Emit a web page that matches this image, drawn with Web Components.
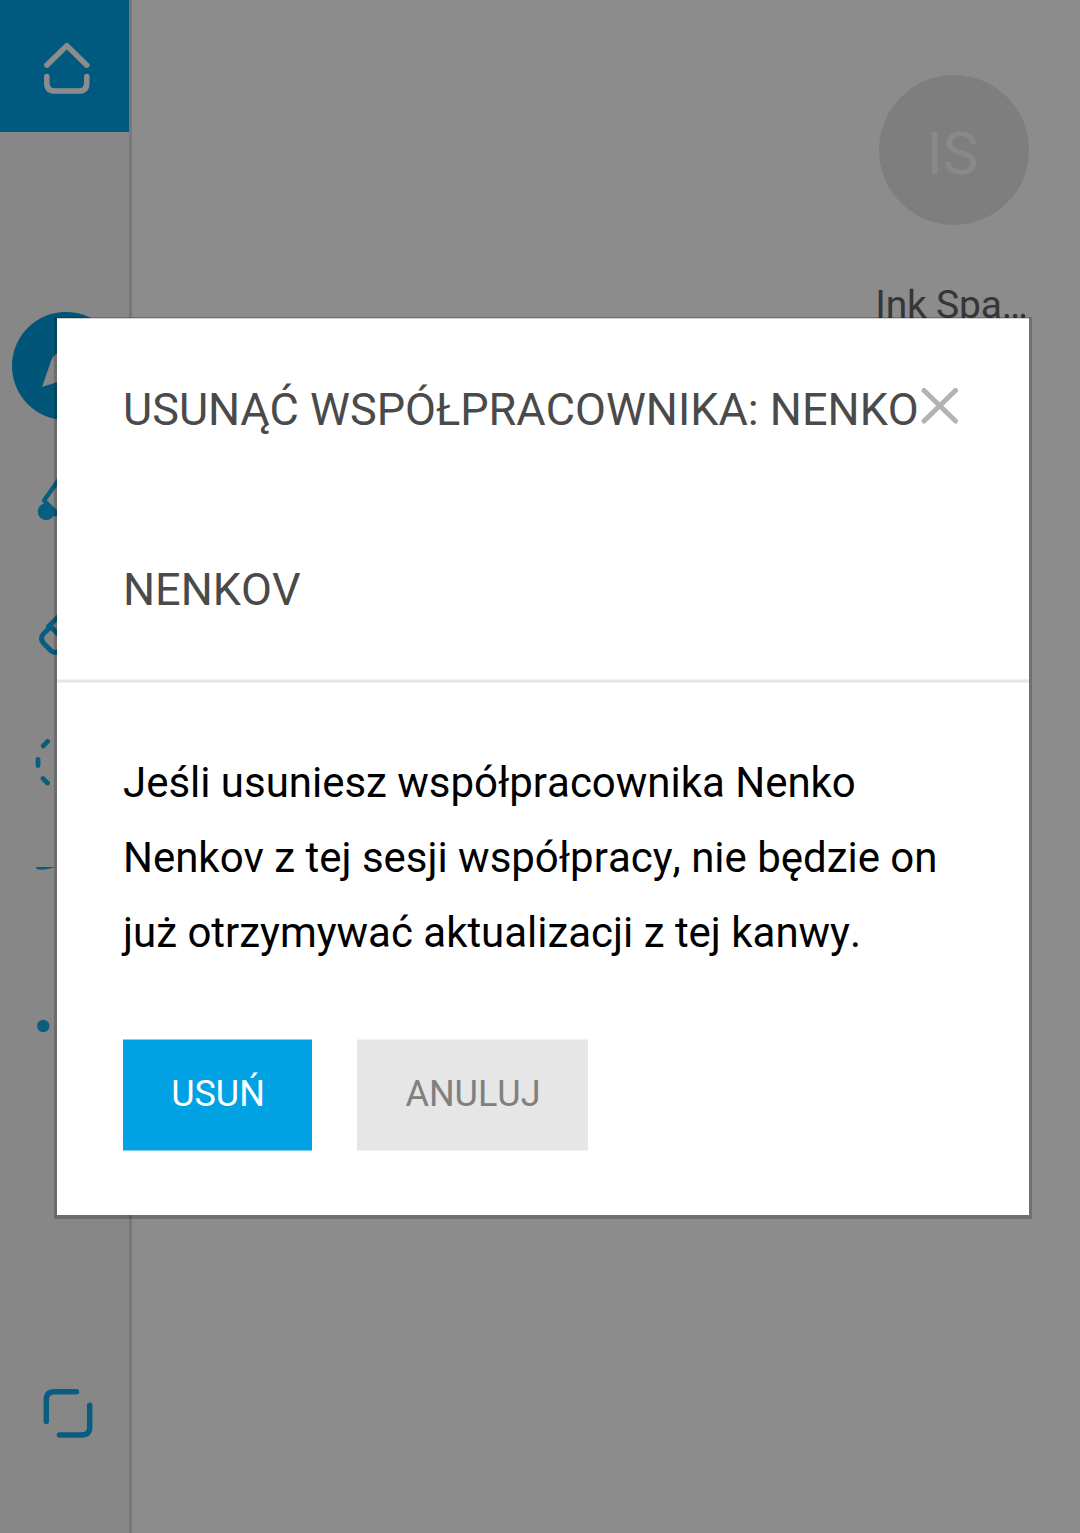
<!DOCTYPE html>
<html lang="pl">
<head>
<meta charset="utf-8">
<title>Ink Space</title>
<style>
html,body{margin:0;height:100%;overflow:hidden}
body{font-family:Roboto,"Liberation Sans",sans-serif;background:#fff}
</style>
</head>
<body>
<ink-app>
  <tool-rail slot="rail"></tool-rail>
  <user-badge slot="user" initials="IS">Ink Spa…</user-badge>
  <confirm-dialog slot="dialog">
    <span slot="title">USUNĄĆ WSPÓŁPRACOWNIKA: NENKO NENKOV</span>
    Jeśli usuniesz współpracownika Nenko Nenkov z tej sesji współpracy, nie będzie on już otrzymywać aktualizacji z tej kanwy.
    <flat-button slot="actions" kind="primary">USUŃ</flat-button>
    <flat-button slot="actions">ANULUJ</flat-button>
  </confirm-dialog>
</ink-app>
<script>
const define = (name, html, setup) => customElements.define(name, class extends HTMLElement {
  connectedCallback() {
    if (this.shadowRoot) return;
    this.attachShadow({mode: 'open'}).innerHTML = html;
    if (setup) setup(this);
  }
});

define('ink-app', `<style>
:host{display:flex;position:relative;width:1080px;height:1533px;overflow:hidden;background:#fff}
main{flex:1;display:flex;justify-content:flex-end;align-items:flex-start;padding:75px 51px 0 0}
.scrim{position:absolute;inset:0;box-sizing:border-box;padding:317px 48px 0 54px;background:rgba(0,0,0,.45)}
</style><slot name="rail"></slot><main><slot name="user"></slot></main><div class="scrim"><slot name="dialog"></slot></div>`);

define('tool-icon', `<style>
:host{display:block;width:129px;height:132px;color:#12acea}
:host([name=home]){background:#00a5e7;color:#fff}
svg{display:block;fill:none;stroke:currentColor;stroke-width:5.5;stroke-linecap:round;stroke-linejoin:round}
</style><svg width="129" height="132" viewBox="0 0 129 132"></svg>`, el => {
  const art = {
    home: '<path d="M46.8 65.2 66.8 45.6 86.8 65.2M46.8 76.4V83Q46.8 91.1 55.1 91.1H78.5Q86.8 91.1 86.8 83V76.4"/>',
    pen: '<circle cx="66" cy="66" r="54" fill="#009bda" stroke="none"/><path d="M42 87 51 61Q54 54 58 53L75 69 70 78Z" fill="#f6f6f6" stroke="none"/>',
    fill: '<circle cx="46.2" cy="79.7" r="8.5" fill="currentColor" stroke="none"/><path stroke-width="4.4" d="M60 46 44 68.5 62 86M53 82 59 82"/>',
    eraser: '<path stroke-width="5" d="M48.5 62.5 63 48M50.5 62.5 62 74M50 63.5 43.3 70Q39.8 74.5 43.3 79L51 86.7Q54 89 57 88.5L67 80"/>',
    select: '<path stroke-width="4.8" d="M43.2 50 47.6 45.4M38 63.3V69.6M43 82.5 47.5 87"/>',
    shape: '<path d="M36 39H55Q43 43.5 36 40.5Z" fill="currentColor" stroke="none"/>',
    dots: '<circle cx="43.3" cy="66" r="6.2" fill="currentColor" stroke="none"/>',
    expand: '<path d="M46.3 73.5V51.5Q46.3 43.7 54.5 43.7H76.5M89.7 57.2V79Q89.7 87 81.5 87H59.5"/>'
  };
  el.shadowRoot.querySelector('svg').innerHTML = art[el.getAttribute('name')];
});

define('tool-rail', `<style>
:host{display:flex;flex-direction:column;box-sizing:border-box;width:132px;height:1533px;padding-bottom:53px;background:#f6f6f6;border-right:3px solid #d9d9d9}
nav{margin-top:168px}
.end{margin-top:auto}
</style><tool-icon name="home"></tool-icon><nav><tool-icon name="pen"></tool-icon><tool-icon name="fill"></tool-icon><tool-icon name="eraser"></tool-icon><tool-icon name="select"></tool-icon><tool-icon name="shape"></tool-icon><tool-icon name="dots"></tool-icon></nav><tool-icon class="end" name="expand"></tool-icon>`);

define('user-badge', `<style>
:host{display:flex;flex-direction:column;align-items:center;width:150px;gap:50px}
.avatar{display:flex;align-items:center;justify-content:center;box-sizing:border-box;width:150px;height:150px;padding:7px 3px 0 0;border-radius:50%;background:#e6e6e6;color:#f9f9f9;font-size:60px}
.name{white-space:nowrap;font-size:39px;line-height:60px;letter-spacing:-.2px;padding-right:5px;color:#636363}
</style><div class="avatar"></div><div class="name"><slot></slot></div>`, el => {
  el.shadowRoot.querySelector('.avatar').textContent = el.getAttribute('initials');
});

define('confirm-dialog', `<style>
:host{display:block;box-sizing:border-box;height:902px;background:#fff;background-clip:padding-box;border:solid rgba(0,0,0,.2);border-width:1px 3px 4px;box-shadow:inset 0 1px #d0d0d0}
header{display:flex;align-items:flex-start;height:364px;box-sizing:border-box;padding:1px 0 0 66px;border-bottom:2px solid #e6e6e6;box-shadow:0 1px #f2f2f2,inset 0 -1px #f2f2f2;color:#4a4a4a}
h1{flex:none;width:798px;margin:0;padding-top:1px;font-size:45px;font-weight:400;line-height:180px;font-kerning:none}
svg{display:block;flex:none;margin-top:69px;fill:none;stroke:#b3b3b3;stroke-width:5;stroke-linecap:round}
.message{width:840px;padding:63px 66px 0;font-size:42px;line-height:75px;letter-spacing:-.02px;font-kerning:none;color:#000}
footer{display:flex;gap:45px;padding:69px 66px 0}
</style><header><h1><slot name="title"></slot></h1><svg width="38" height="36" viewBox="0 0 38 36"><path d="M3 2.5 34.5 33M34.5 2.5 3 33"/></svg></header><div class="message"><slot></slot></div><footer><slot name="actions"></slot></footer>`);

define('flat-button', `<style>
:host{display:block}
button{display:block;box-sizing:border-box;width:231px;height:112px;margin:0;padding:0 0 0 1px;border:solid #f2f2f2;border-width:1px 0;background:#e6e6e6;color:#808080;font:400 36px/108px Roboto,"Liberation Sans",sans-serif;font-kerning:none}
button span{display:block;height:110px}
:host([kind=primary]) button{width:189px;border-color:#80d1f1;background:#00a2e3;color:#fff}
</style><button><span><slot></slot></span></button>`);
</script>
</body>
</html>
